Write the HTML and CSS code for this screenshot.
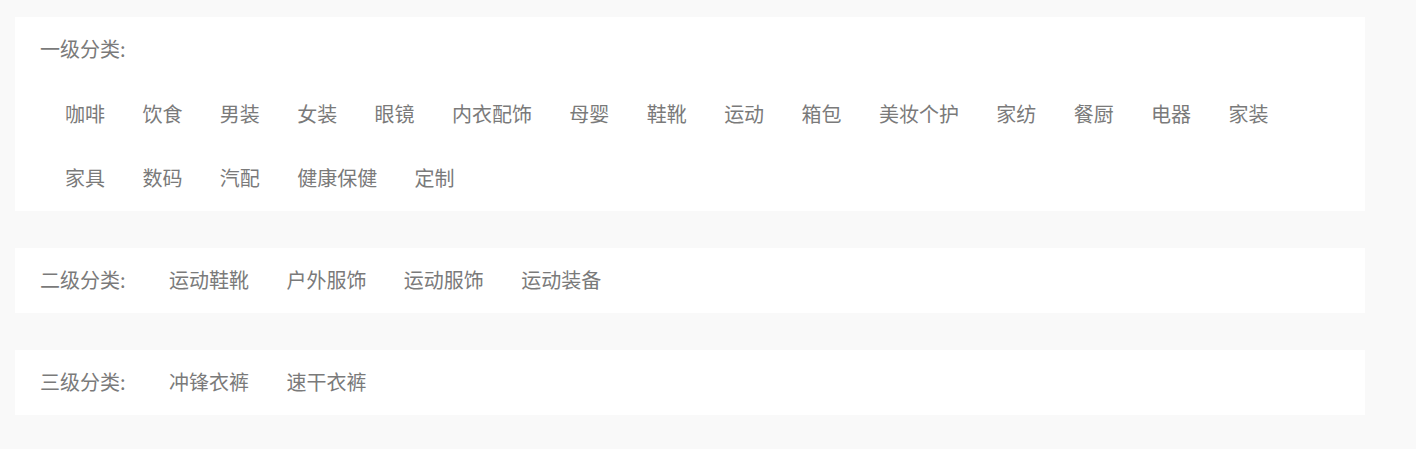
FILE: index.html
```html
<!DOCTYPE html>
<html lang="zh-CN">
<head>
<meta charset="utf-8">
<title>分类</title>
<link rel="stylesheet" href="styles.css">
</head>
<body>
<div class="page">
  <section class="card card-top">
    <div class="label">一级分类:</div>
    <ul class="items items-wrap">
      <li>咖啡</li><li>饮食</li><li>男装</li><li>女装</li><li>眼镜</li><li>内衣配饰</li><li>母婴</li><li>鞋靴</li><li>运动</li><li>箱包</li><li>美妆个护</li><li>家纺</li><li>餐厨</li><li>电器</li><li>家装</li><li>家具</li><li>数码</li><li>汽配</li><li>健康保健</li><li>定制</li>
    </ul>
  </section>
  <section class="card card-row">
    <div class="label label-fixed">二级分类:</div>
    <ul class="items">
      <li>运动鞋靴</li><li>户外服饰</li><li>运动服饰</li><li>运动装备</li>
    </ul>
  </section>
  <section class="card card-row">
    <div class="label label-fixed">三级分类:</div>
    <ul class="items">
      <li>冲锋衣裤</li><li>速干衣裤</li>
    </ul>
  </section>
</div>
</body>
</html>
```
FILE: styles.css
```css
html, body {
  margin: 0;
  padding: 0;
  background: #f9f9f9;
}
body {
  font-family: "Noto Sans CJK SC", "Noto Sans", sans-serif;
  font-size: 20px;
  color: #7a7a7a;
}
.page {
  width: 1350px;
  margin-left: 15px;
  padding-top: 17px;
  display: flex;
  flex-direction: column;
  gap: 37px;
}
.card {
  background: #fff;
}
.label {
  height: 64px;
  line-height: 64px;
  padding-left: 25px;
  white-space: nowrap;
}
.items {
  list-style: none;
  margin: 0;
  padding: 0;
  display: flex;
  column-gap: 37.4px;
}
.items li {
  line-height: 64px;
  white-space: nowrap;
}
.card-top {
  padding-bottom: 1px;
}
.items-wrap {
  flex-wrap: wrap;
  padding: 1px 50px 0 50px;
}
.card-row {
  display: flex;
  padding-bottom: 1px;
}
.label-fixed {
  width: 154px;
  padding-left: 25px;
  box-sizing: border-box;
}
```
